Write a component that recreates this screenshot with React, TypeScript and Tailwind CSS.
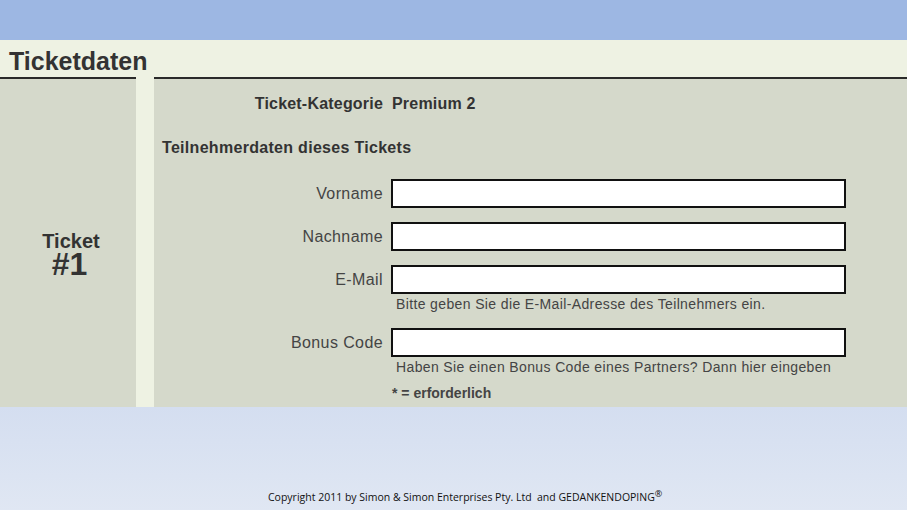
import React from 'react'

const fields = [
  { label: 'Vorname', hint: '' },
  { label: 'Nachname', hint: '' },
  { label: 'E-Mail', hint: 'Bitte geben Sie die E-Mail-Adresse des Teilnehmers ein.' },
  { label: 'Bonus Code', hint: 'Haben Sie einen Bonus Code eines Partners? Dann hier eingeben' },
]

export default function App() {
  return (
    <div className="w-[907px] h-[510px] flex flex-col overflow-hidden font-['Liberation_Sans',Arial,sans-serif]">
      {/* top band */}
      <div className="h-[40px] bg-[#9db7e3]" />

      {/* section title */}
      <div className="h-[37px] bg-[#eef2e3] pl-[9px] pt-[6px]">
        <h1 className="text-[25px] leading-[30px] font-bold text-[#333]">Ticketdaten</h1>
      </div>

      {/* content */}
      <div className="h-[330px] flex">
        <div className="w-[136px] border-t-2 border-[#2a2a2a] bg-[#d5d9cb] flex flex-col items-center justify-center pt-[22px] text-[#333] font-bold">
          <div className="text-[20px] leading-[20px] pl-[6px]">Ticket</div>
          <div className="text-[32px] leading-[26px] pl-[3px]">#1</div>
        </div>
        <div className="w-[18px] bg-[#eef2e3]" />
        <div className="flex-1 border-t-2 border-[#2a2a2a] bg-[#d5d9cb]">
          <div className="flex pt-[15px] text-[16px] leading-[20px] font-bold text-[#333] tracking-[0.2px]">
            <div className="w-[229px] text-right">Ticket-Kategorie</div>
            <div className="pl-[9px]">Premium 2</div>
          </div>
          <div className="mt-[24px] pl-[8px] text-[16px] leading-[20px] font-bold text-[#333] tracking-[0.3px]">
            Teilnehmerdaten dieses Tickets
          </div>

          <div className="mt-[21px] flex flex-col">
            {fields.map((f, i) => (
              <div key={f.label} className={i === 0 ? '' : f.label === 'Bonus Code' ? 'mt-[16px]' : 'mt-[14px]'}>
                <div className="flex items-center">
                  <label className="w-[229px] text-right text-[16px] leading-[20px] text-[#444] tracking-[0.4px]">{f.label}</label>
                  <input className="ml-[8px] w-[455px] h-[29px] bg-white border-2 border-[#111] outline-none" />
                </div>
                {f.hint && (
                  <div className="mt-[2px] pl-[242px] text-[14px] leading-[16px] text-[#444] tracking-[0.37px]">{f.hint}</div>
                )}
              </div>
            ))}
          </div>

          <div className="mt-[10px] pl-[238px] text-[14px] leading-[16px] font-bold text-[#444]">* = erforderlich</div>
        </div>
      </div>

      {/* footer */}
      <div className="flex-1 bg-gradient-to-b from-[#d4def0] to-[#e0e7f3] pt-[83px] pl-[268px]">
        <p className="text-[10.5px] leading-[14px] text-[#111] font-['Open_Sans',sans-serif]">
          Copyright 2011 by Simon &amp; Simon Enterprises Pty. Ltd&nbsp; and GEDANKENDOPING
          <sup className="text-[9px]">®</sup>
        </p>
      </div>
    </div>
  )
}
